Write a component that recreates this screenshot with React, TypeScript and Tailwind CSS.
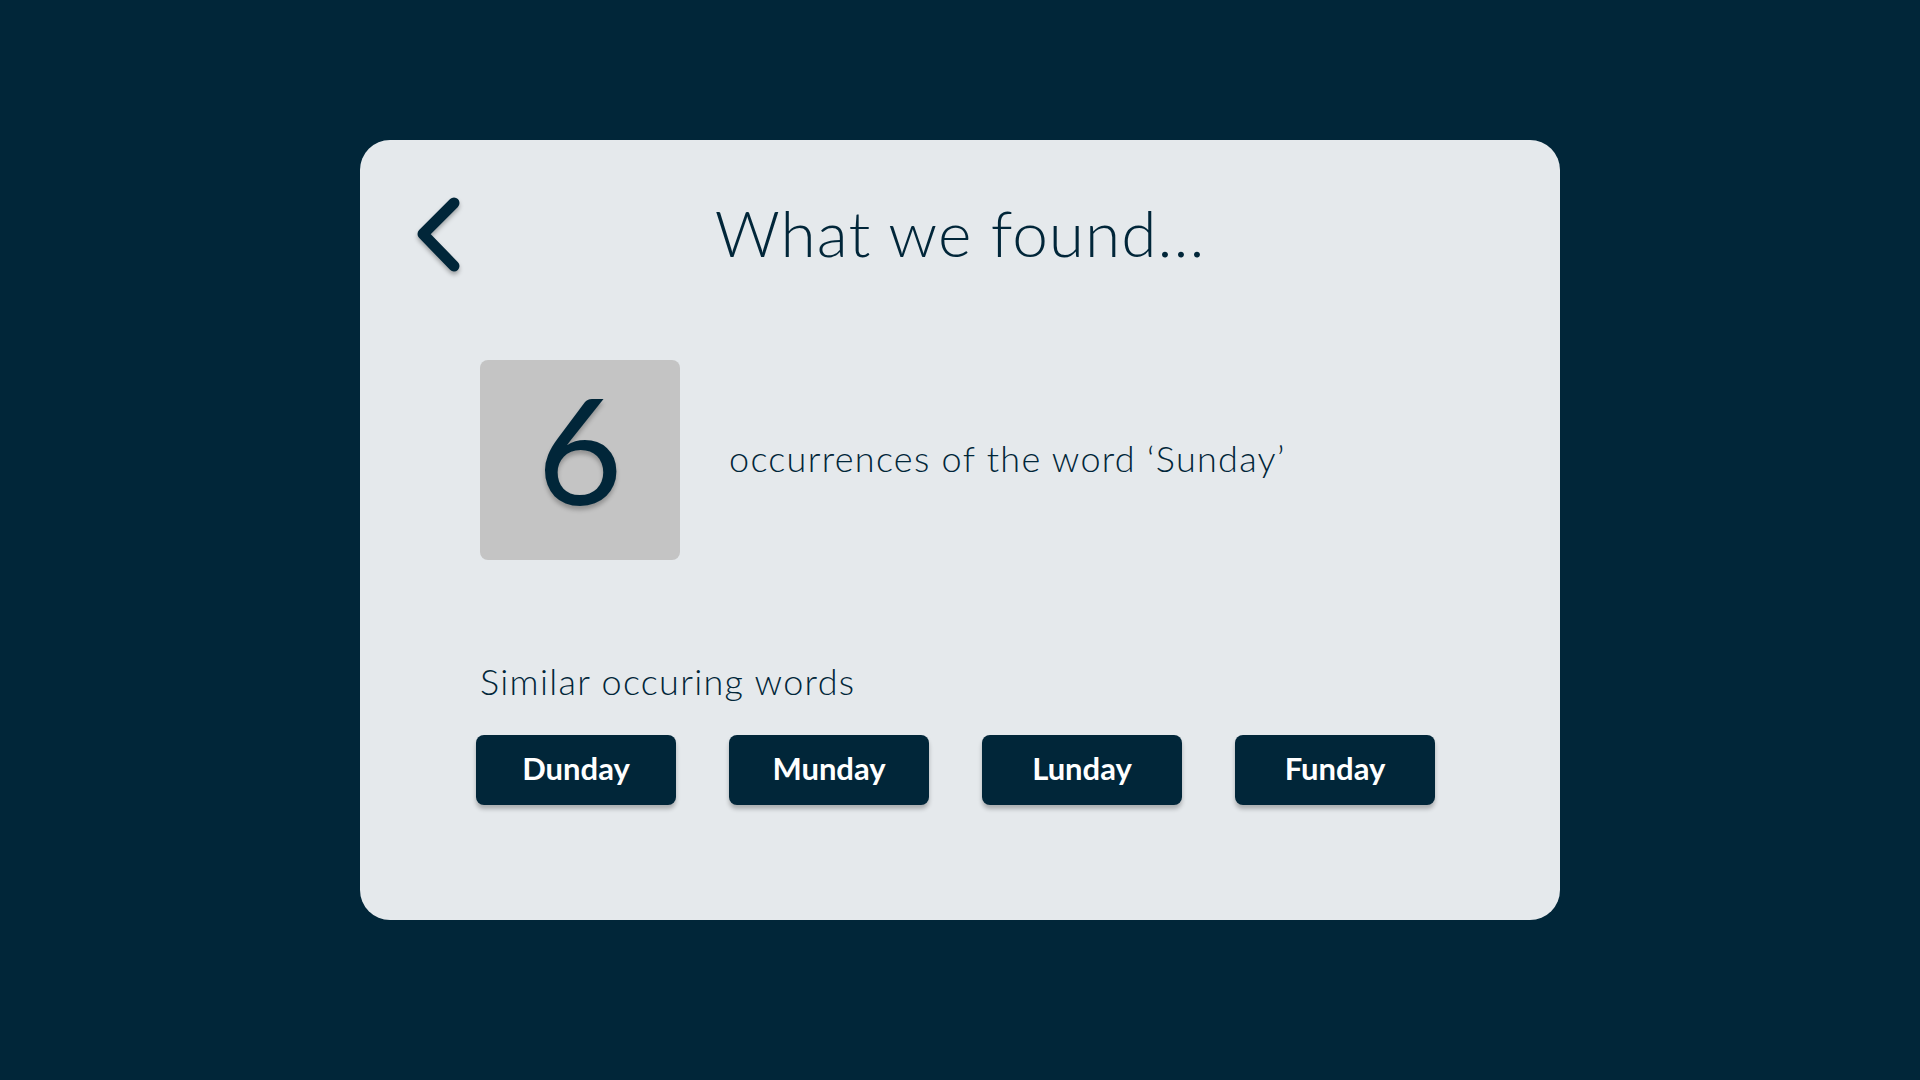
import * as React from "react";

const SIMILAR = ["Dunday", "Munday", "Lunday", "Funday"];

function BackChevron() {
  return (
    <svg
      width="50"
      height="82"
      viewBox="0 0 50 82"
      fill="none"
      className="drop-shadow-[0_3px_2px_rgba(0,0,0,0.3)]"
    >
      <path
        d="M40 9 L9 40 L40 72"
        stroke="#012639"
        strokeWidth="11"
        strokeLinecap="round"
        strokeLinejoin="round"
      />
    </svg>
  );
}

export default function App() {
  return (
    <div className="min-h-screen bg-[#012639] flex justify-center pt-[140px] font-['Lato','Open_Sans',sans-serif] text-[#012639]">
      <div className="w-[1200px] h-[780px] rounded-[30px] bg-[#e5e9ec] flex flex-col">
        {/* Header */}
        <div className="grid grid-cols-[1fr_auto_1fr] items-center pt-[54px] px-[54px]">
          <button className="justify-self-start">
            <BackChevron />
          </button>
          <h1 className="text-[64px] leading-none font-light tracking-[1px] pb-[4px]">
            What we found...
          </h1>
          <div />
        </div>

        {/* Count */}
        <div className="mt-[84px] ml-[120px] flex items-center gap-[49px]">
          <div className="w-[200px] h-[200px] rounded-[8px] bg-[#c4c4c4] flex items-center justify-center">
            <span className="text-[148px] leading-none pb-[24px] [text-shadow:0_4px_4px_rgba(0,0,0,0.25)]">
              6
            </span>
          </div>
          <p className="text-[36px] leading-none font-light tracking-[1.3px] pb-[4px]">
            occurrences of the word ‘Sunday’
          </p>
        </div>

        {/* Similar words */}
        <p className="mt-[103px] ml-[120px] text-[36px] leading-none font-light tracking-[1.3px]">
          Similar occuring words
        </p>
        <div className="mt-[36px] ml-[116px] flex gap-[53px]">
          {SIMILAR.map((word) => (
            <button
              key={word}
              className="w-[200px] h-[70px] rounded-[8px] bg-[#012639] text-white text-[31px] font-bold pb-[4px] shadow-[0_4px_4px_rgba(0,0,0,0.25)]"
            >
              {word}
            </button>
          ))}
        </div>
      </div>
    </div>
  );
}
